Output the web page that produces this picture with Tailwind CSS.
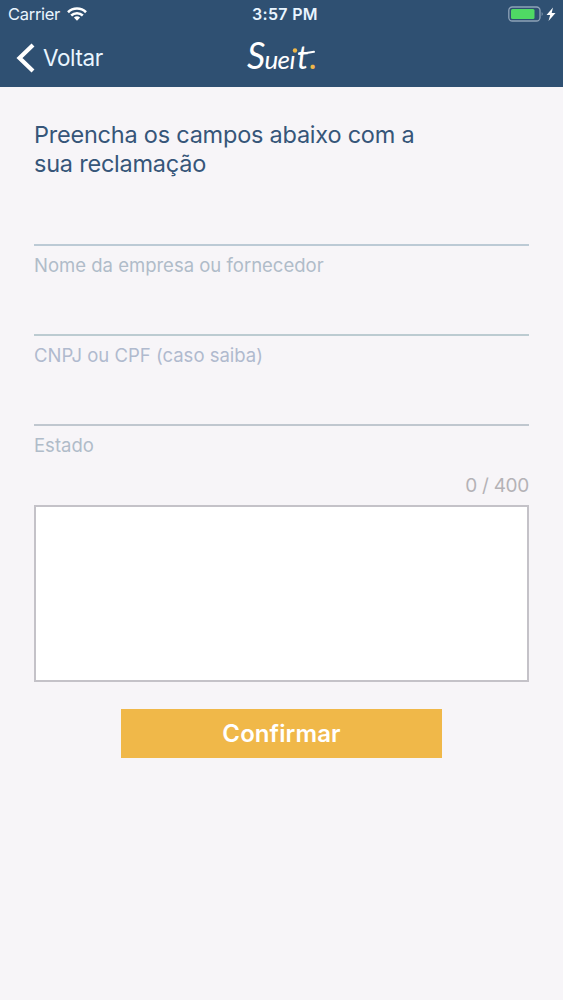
<!doctype html>
<html lang="pt-BR">
<head>
  <meta charset="UTF-8" />
  <meta name="viewport" content="width=device-width, initial-scale=1.0" />
  <title>Reclamação</title>
  <script src="https://cdn.jsdelivr.net/npm/@tailwindcss/browser@4"></script>
</head>
<body class="bg-[#f7f5f8] font-['Inter','Liberation_Sans',sans-serif]">
  <div class="min-h-screen">

    <header class="h-[87px] bg-[#2f5072] text-[#e9f5ff]">
      <!-- status bar -->
      <div class="h-7 grid grid-cols-3 items-center pl-2 pr-[6px]">
        <div class="flex items-center gap-[7px]">
          <span class="text-[16.500px] leading-7 tracking-[-0.3px]">Carrier</span>
          <svg class="w-5 h-[14px]" viewBox="0 0 20 14" fill="none" stroke="#fff" stroke-width="2.6">
            <path d="M1 5.2C6 .3 14 .3 19 5.2" />
            <path d="M4.2 8.5C7.5 5.5 12.500 5.500 15.800 8.500" />
            <path d="M6.900 10.600Q10 8 13.100 10.600L10 13.700Z" fill="#fff" stroke="none" />
          </svg>
        </div>
        <span class="text-center text-[16px] font-semibold leading-7 tracking-[0.3px] whitespace-nowrap pl-[5px]">3:57 PM</span>
        <div class="flex items-center justify-end">
          <svg class="w-[49px] h-[18px]" viewBox="0 0 49 18">
            <rect x=".8" y="2" width="31.200" height="14" rx="3.500" fill="none" stroke="#8fa3b8" stroke-width="1.300" />
            <rect x="3" y="4" width="23.500" height="10" rx="1.500" fill="#4fd964" />
            <path d="M33.700 7q2 2 0 4Z" fill="#8fa3b8" />
            <path d="M45 2.500L38.500 10h3.700L40.500 16 47.500 8h-3.800Z" fill="#fff" />
          </svg>
        </div>
      </div>
      <!-- nav bar -->
      <div class="h-[59px] grid grid-cols-3 items-center px-4">
        <a href="#" class="flex items-center gap-2">
          <svg class="w-[19px] h-[30px]" viewBox="0 0 19 30" fill="none" stroke="#fff" stroke-width="4.200">
            <path d="M17 2L3.500 15 17 28" />
          </svg>
          <span class="text-[22.500px] leading-[30px] tracking-[-0.400px]">Voltar</span>
        </a>
        <svg class="w-[76px] h-12 overflow-visible justify-self-center" viewBox="0 -6 76 48" fill="#fff" font-family="Lato, sans-serif" font-style="italic">
          <text y="29" font-size="26"><tspan x="3" font-size="36">S</tspan><tspan x="20.500">u</tspan><tspan x="33.500">e</tspan><tspan x="45.500">ı</tspan><tspan x="53" font-size="32">t</tspan><tspan x="66" fill="#f0b849" font-size="28" font-weight="700">.</tspan></text>
          <circle cx="51" cy="10.500" r="2.200" fill="#f0b849" />
          <path d="M55 14Q62 13.200 70 11.800" fill="none" stroke="#fff" stroke-width="2" stroke-linecap="round" />
        </svg>
      </div>
    </header>

    <main class="px-[34px] pt-[33px]">
      <h1 class="text-[23.500px] leading-[29px] text-[#365679]"><span class="block tracking-[-0.230px] whitespace-nowrap">Preencha os campos abaixo com a</span><span class="block tracking-[-0.230px]">sua reclamação</span></h1>

      <form class="mt-[66px]">
        <div class="h-[90px] border-t-2 border-[#bccad5] pt-[7px]">
          <label class="block text-[18.500px] leading-6 text-[#b0bcc9]"><span>Nome da empresa ou fornecedor</span></label>
        </div>
        <div class="h-[90px] border-t-2 border-[#bccbd1] pt-[7px]">
          <label class="block text-[18.500px] leading-6 text-[#b0bace]"><span>CNPJ ou CPF (caso saiba)</span></label>
        </div>
        <div class="h-[50px] border-t-2 border-[#c0c7cf] pt-[7px]">
          <label class="block text-[18.500px] leading-6 text-[#b0bcc9]"><span>Estado</span></label>
        </div>
        <div class="text-right text-[19px] leading-6 tracking-[-0.300px] text-[#b4b2b6]"><span>0 / 400</span></div>
        <textarea class="mt-[7px] block w-full h-[177px] resize-none border-2 border-[#c4c2c8] bg-white outline-none"></textarea>
        <button type="button" class="mt-[27px] mx-auto block w-[321px] h-[49px] bg-[#f0b849] text-white text-[24px] tracking-[0.100px] font-semibold">Confirmar</button>
      </form>
    </main>

  </div>
</body>
</html>
